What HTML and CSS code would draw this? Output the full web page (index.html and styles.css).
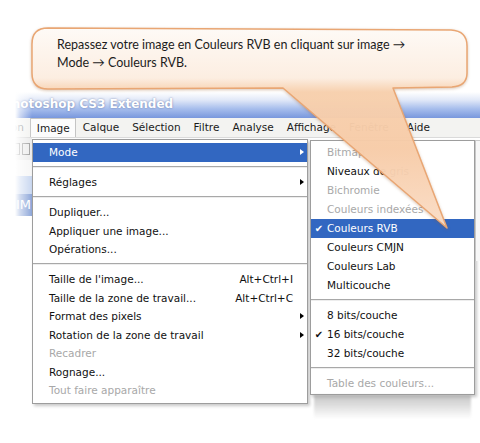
FILE: index.html
```html
<!DOCTYPE html>
<html lang="fr">

<head>
    <meta charset="UTF-8">
    <title>Mode Couleurs RVB</title>
    <link rel="stylesheet" href="styles.css">
</head>

<body>
    <div class="page">
        <div class="window">
            <div class="titlebar"><span class="title">Photoshop CS3 Extended</span></div>
            <div class="menubar">
                <span class="mb-item first">Edition</span>
                <span class="mb-item open">Image</span>
                <span class="mb-item">Calque</span>
                <span class="mb-item">Sélection</span>
                <span class="mb-item">Filtre</span>
                <span class="mb-item">Analyse</span>
                <span class="mb-item">Affichage</span>
                <span class="mb-item">Fenêtre</span>
                <span class="mb-item help">Aide</span>
            </div>
            <div class="work">
                <div class="side">
                    <div class="opt"><span class="ico"></span><span class="ico"></span></div>
                    <div class="blank"></div>
                    <div class="tabbar"></div>
                    <div class="doc">IM</div>
                </div>

                <div class="menu">
                    <div class="item hl"><span class="label">Mode</span><span class="arrow"></span></div>
                    <div class="sep"></div>
                    <div class="item"><span class="label">Réglages</span><span class="arrow"></span></div>
                    <div class="sep"></div>
                    <div class="item"><span class="label">Dupliquer...</span></div>
                    <div class="item"><span class="label">Appliquer une image...</span></div>
                    <div class="item"><span class="label">Opérations...</span></div>
                    <div class="sep"></div>
                    <div class="item"><span class="label">Taille de l'image...</span><span class="key">Alt+Ctrl+I</span></div>
                    <div class="item"><span class="label">Taille de la zone de travail...</span><span class="key">Alt+Ctrl+C</span></div>
                    <div class="item"><span class="label">Format des pixels</span><span class="arrow"></span></div>
                    <div class="item"><span class="label">Rotation de la zone de travail</span><span class="arrow"></span></div>
                    <div class="item off"><span class="label">Recadrer</span></div>
                    <div class="item"><span class="label">Rognage...</span></div>
                    <div class="item off"><span class="label">Tout faire apparaître</span></div>
                </div>

                <div class="subcol">
                    <div class="menu sub">
                        <div class="item off"><span class="mark"></span><span class="label">Bitmap</span></div>
                        <div class="item"><span class="mark"></span><span class="label">Niveaux de gris</span></div>
                        <div class="item off"><span class="mark"></span><span class="label">Bichromie</span></div>
                        <div class="item off"><span class="mark"></span><span class="label">Couleurs indexées</span></div>
                        <div class="item hl"><span class="mark">✔</span><span class="label">Couleurs RVB</span></div>
                        <div class="item"><span class="mark"></span><span class="label">Couleurs CMJN</span></div>
                        <div class="item"><span class="mark"></span><span class="label">Couleurs Lab</span></div>
                        <div class="item"><span class="mark"></span><span class="label">Multicouche</span></div>
                        <div class="sep"></div>
                        <div class="item"><span class="mark"></span><span class="label">8 bits/couche</span></div>
                        <div class="item"><span class="mark">✔</span><span class="label">16 bits/couche</span></div>
                        <div class="item"><span class="mark"></span><span class="label">32 bits/couche</span></div>
                        <div class="sep"></div>
                        <div class="item off"><span class="mark"></span><span class="label">Table des couleurs...</span></div>
                    </div>
                    <div class="reflect"></div>
                </div>

                <div class="edge"></div>
            </div>
        </div>

        <div class="fade-left"></div>

        <svg class="callout" viewBox="0 0 480 443" width="480" height="443">
            <defs>
                <linearGradient id="peach" gradientUnits="userSpaceOnUse" x1="0" y1="28" x2="0" y2="228">
                    <stop offset="0" stop-color="#fffcf9" />
                    <stop offset="0.25" stop-color="#fdefe3" />
                    <stop offset="0.32" stop-color="#f8d1af" />
                    <stop offset="0.6" stop-color="#f8cdaa" />
                    <stop offset="1" stop-color="#fbdfc9" />
                </linearGradient>
            </defs>
            <path d="M48 28 L451 30 Q467 31 467 46 L467 73 Q467 86 452 87 L393 88 L447 228 L283 88 L48 89 Q32 89 32 73 L32 44 Q32 28 48 28 Z"
                fill="url(#peach)" fill-opacity="0.96" stroke="#e9a673" stroke-width="1.5" stroke-linejoin="round" />
        </svg>
        <p class="callout-text">Repassez votre image en Couleurs RVB en cliquant sur image →<br>Mode → Couleurs RVB.</p>
    </div>
</body>

</html>
```

FILE: styles.css
```css
body {
    margin: 0;
    font-family: "DejaVu Sans", sans-serif;
}

.page {
    position: relative;
    width: 480px;
    height: 443px;
    overflow: hidden;
    background: #fff;
}

.window {
    padding-top: 92px;
}

.titlebar {
    height: 26px;
    box-sizing: border-box;
    padding: 0 0 2px 3px;
    display: flex;
    align-items: center;
    background: linear-gradient(#fff 0%, #e2e9f8 30%, #a6bdec 65%, #7897dd 100%);
}

.title {
    font: bold 12px "DejaVu Sans", sans-serif;
    color: #fff;
    text-shadow: 0 0 2px rgba(30, 50, 110, .55);
    white-space: nowrap;
}

.menubar {
    height: 19px;
    display: flex;
    align-items: stretch;
    background: #f3f3f1;
    border-bottom: 1px solid #dadada;
    font-size: 10.5px;
    white-space: nowrap;
}

.mb-item {
    padding: 0 6.5px;
    line-height: 19px;
    color: #1a1a1a;
}

.mb-item.first {
    margin-left: -19px;
    color: #888;
}

.mb-item.open {
    padding: 0 5.5px;
    line-height: 18px;
    background: #fcfcfc;
    border: 1px solid #c4c4c4;
    border-bottom: none;
}

.mb-item.help {
    margin-left: 5px;
}

.work {
    display: flex;
    align-items: flex-start;
}

.side {
    width: 32px;
    flex: none;
}

.opt {
    height: 22px;
    background: #ececec;
    display: flex;
    align-items: center;
    justify-content: flex-end;
    gap: 2px;
    padding-right: 2px;
}

.ico {
    width: 6px;
    height: 10px;
    border: 1px solid #9a9a9a;
}

.blank {
    height: 16px;
    background: #f6f6f6;
}

.tabbar {
    height: 18px;
    background: #c9d7f0;
}

.doc {
    height: 22px;
    background: #8ea7d9;
    color: #fff;
    font-size: 13px;
    line-height: 22px;
    text-align: right;
    padding-right: 1px;
    overflow: hidden;
}

.menu {
    width: 276px;
    flex: none;
    box-sizing: border-box;
    margin-top: 1px;
    padding: 3px 0;
    background: #fff;
    border: 1px solid #9d9d9d;
    box-shadow: 2px 2px 3px rgba(0, 0, 0, .22);
    font-size: 10.5px;
    white-space: nowrap;
}

.item {
    height: 18.5px;
    display: flex;
    align-items: center;
    padding: 0 3px 0 16px;
    color: #111;
}

.item.hl {
    background: #3267c1;
    color: #fff;
}

.item.off {
    color: #a8a8a8;
}

.label {
    flex: 1;
}

.key {
    margin-right: 11px;
}

.arrow {
    width: 0;
    height: 0;
    border-left: 4px solid #000;
    border-top: 3.5px solid transparent;
    border-bottom: 3.5px solid transparent;
}

.hl .arrow {
    border-left-color: #fff;
}

.sep {
    margin: 4.5px 0 5px;
    height: 1px;
    background: #a8a8a8;
    border-bottom: 1px solid #ededed;
}

.subcol {
    margin-left: 2px;
    flex: none;
}

.menu.sub {
    width: 165px;
    margin-top: 2px;
    padding: 1.5px 0;
}

.sub .item {
    height: 19px;
    padding: 0;
}

.sub .sep {
    margin: 4.5px 0;
}

.mark {
    width: 16px;
    text-align: center;
    font-size: 10px;
}

.reflect {
    height: 24px;
    margin: 0 4px;
    background: linear-gradient(rgba(150, 150, 150, .55), rgba(255, 255, 255, 0));
    filter: blur(1px);
}

.edge {
    flex: 1;
    height: 120px;
    margin-top: 2px;
    background: #f7f7f7;
    border-left: 1px solid #c8c8c8;
    border-top: 1px solid #c8c8c8;
}

.fade-left {
    position: absolute;
    left: 0;
    top: 88px;
    width: 34px;
    height: 340px;
    background: linear-gradient(to right, #fff 0, #fff 15px, rgba(255, 255, 255, .6) 20px, rgba(255, 255, 255, .25) 27px, rgba(255, 255, 255, 0) 32px);
}

.callout {
    position: absolute;
    left: 0;
    top: 0;
    filter: drop-shadow(0 1px 1.5px rgba(150, 90, 40, .35));
}

.callout-text {
    position: absolute;
    left: 57px;
    top: 36px;
    margin: 0;
    font: 12.5px/18px Lato, "Noto Sans", sans-serif;
    color: #1c1c1c;
    white-space: nowrap;
}
```
